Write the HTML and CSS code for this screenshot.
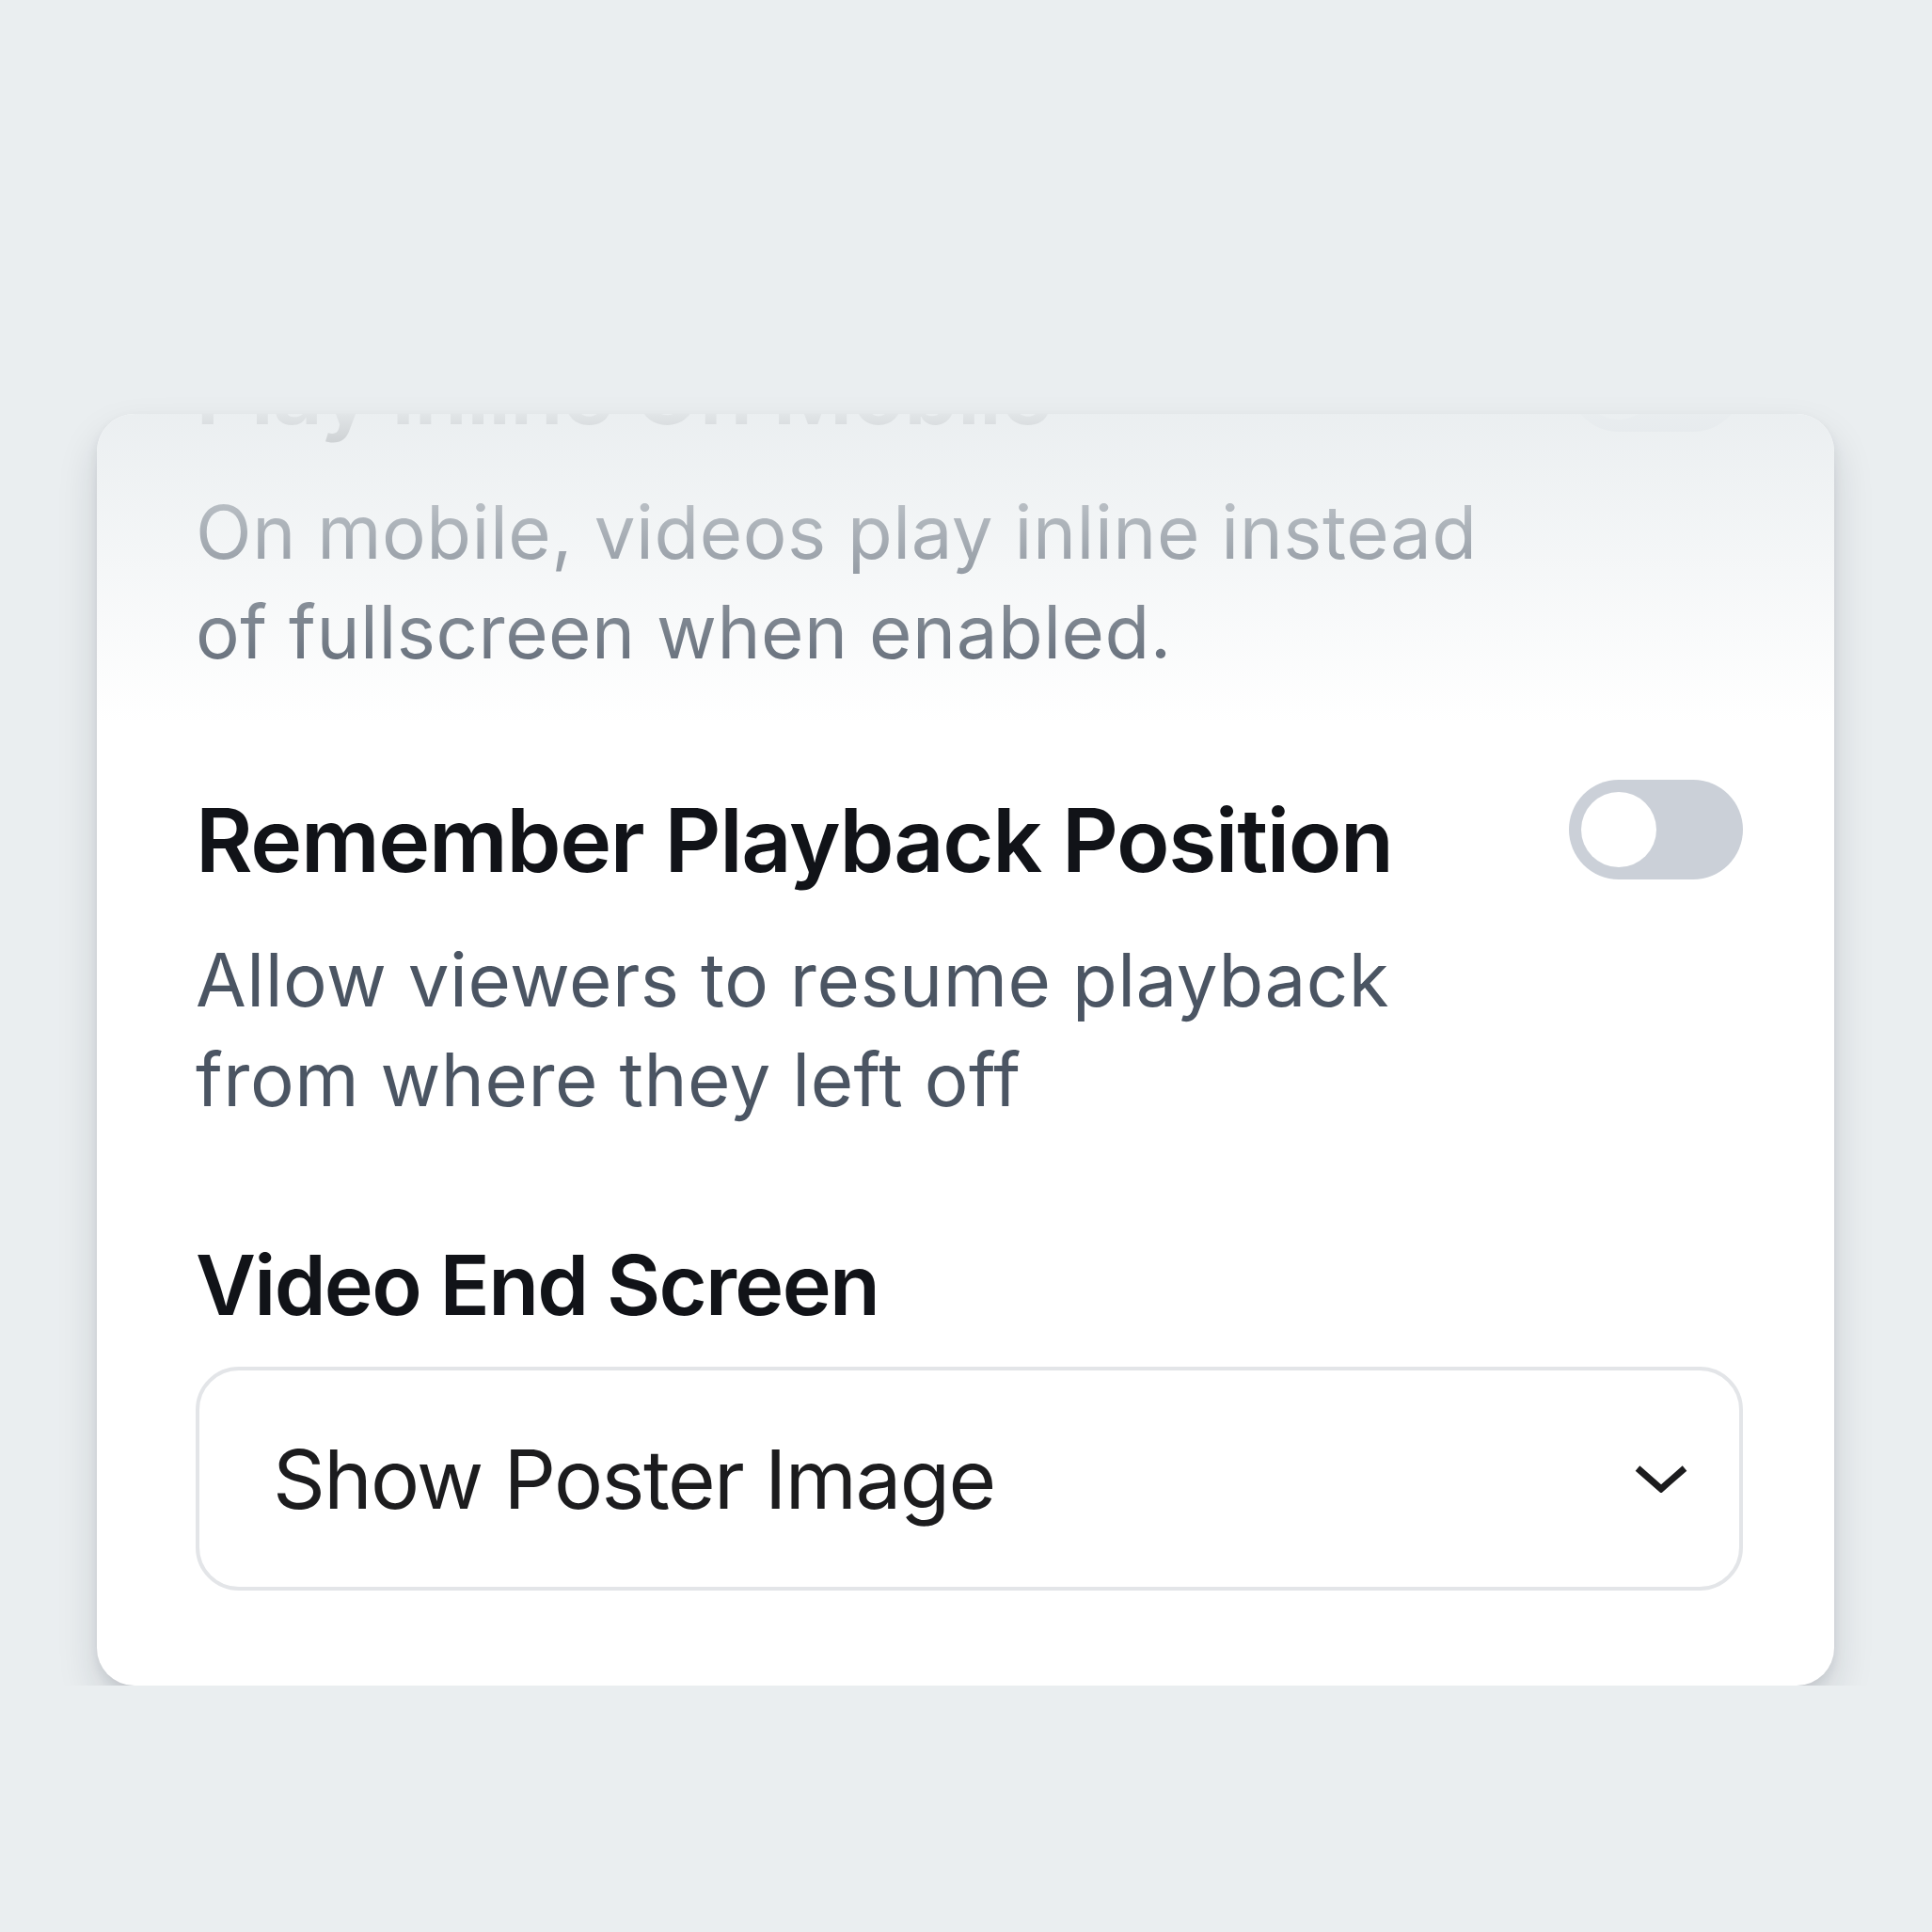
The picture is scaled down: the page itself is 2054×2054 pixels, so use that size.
FILE: index.html
```html
<!DOCTYPE html>
<html>
    <head>
        <meta charset="utf-8">
        <link rel="stylesheet" href="styles.css">
        <title>Playback settings</title>
    </head>
    <body>
        <div class="stage">
            <div class="card">
                <div class="card-body">

                    <div class="setting">
                        <div class="setting-head">
                            <h2 class="setting-title">Play Inline On Mobile</h2>
                            <span class="toggle"><span class="toggle-knob"></span></span>
                        </div>
                        <p class="setting-desc">On mobile, videos play inline instead<br>of fullscreen when enabled.</p>
                    </div>

                    <div class="setting">
                        <div class="setting-head">
                            <h2 class="setting-title">Remember Playback Position</h2>
                            <span class="toggle"><span class="toggle-knob"></span></span>
                        </div>
                        <p class="setting-desc">Allow viewers to resume playback<br>from where they left off</p>
                    </div>

                    <div class="setting">
                        <label class="field-label">Video End Screen</label>
                        <div class="select">
                            <span class="select-value">Show Poster Image</span>
                            <svg class="chevron" width="56" height="30" viewBox="0 0 56 30">
                                <path d="M3 4 L28 26 L53 4" fill="none" stroke="#1c1c1e" stroke-width="7"/>
                            </svg>
                        </div>
                    </div>

                </div>
                <div class="fade"></div>
            </div>
        </div>
    </body>
</html>
```

FILE: styles.css
```css
body {
    margin: 0;
    background: #eaeef0;
    font-family: "Inter", "Liberation Sans", sans-serif;
}

.stage {
    padding: 440px 0 0 103px;
}

.card {
    position: relative;
    width: 1847px;
    height: 1352px;
    background: #ffffff;
    border-radius: 40px;
    overflow: hidden;
    box-shadow: 0 22px 44px rgba(20, 30, 45, 0.14), 0 6px 12px rgba(20, 30, 45, 0.08);
}

/* list is scrolled: first row sits partly above the card top */
.card-body {
    margin-top: -79px;
    padding: 0 97px 102px 105px;
    display: flex;
    flex-direction: column;
    gap: 112px;
}

.setting-head {
    display: flex;
    justify-content: space-between;
    align-items: flex-start;
}

.setting-title {
    margin: 0;
    font-size: 93px;
    line-height: 112px;
    font-weight: 600;
    letter-spacing: -1.3px;
    color: #111318;
}

.setting-desc {
    margin: 40px 0 0 0;
    font-size: 78px;
    line-height: 106px;
    letter-spacing: 0.5px;
    color: #4b5563;
}

.toggle {
    display: flex;
    align-items: center;
    box-sizing: border-box;
    width: 185px;
    height: 106px;
    margin-top: -8px;
    padding: 0 13px;
    border-radius: 53px;
    background: #cbd0d8;
}

.toggle-knob {
    width: 80px;
    height: 80px;
    border-radius: 50%;
    background: #ffffff;
}

.field-label {
    display: block;
    font-size: 88px;
    line-height: 106px;
    font-weight: 600;
    letter-spacing: -1.7px;
    color: #111318;
}

.select {
    display: flex;
    align-items: center;
    justify-content: space-between;
    box-sizing: border-box;
    height: 238px;
    margin-top: 34px;
    padding: 0 55px 0 78px;
    border: 4px solid #e3e5e8;
    border-radius: 46px;
}

.select-value {
    font-size: 87px;
    letter-spacing: -1.6px;
    color: #1c1c1e;
}

.fade {
    position: absolute;
    top: 0;
    left: 0;
    right: 0;
    height: 330px;
    background: linear-gradient(rgba(234, 238, 240, 0.96), rgba(234, 238, 240, 0));
}
```
